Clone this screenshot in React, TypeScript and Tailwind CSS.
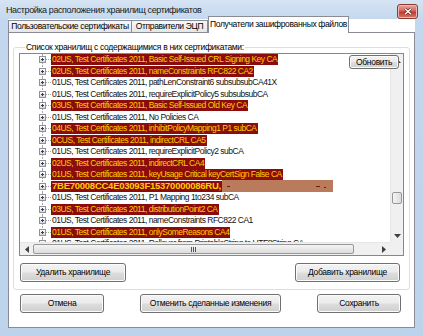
import React from "react";

type Row = { text: string; hl?: boolean; bold?: boolean };

const rows: Row[] = [
  { text: "02US, Test Certificates 2011, Basic Self-Issued CRL Signing Key CA", hl: true },
  { text: "02US, Test Certificates 2011, nameConstraints RFC822 CA2", hl: true },
  { text: "01US, Test Certificates 2011, pathLenConstraint6 subsubsubCA41X" },
  { text: "01US, Test Certificates 2011, requireExplicitPolicy5 subsubsubCA" },
  { text: "03US, Test Certificates 2011, Basic Self-Issued Old Key CA", hl: true },
  { text: "01US, Test Certificates 2011, No Policies CA" },
  { text: "04US, Test Certificates 2011, inhibitPolicyMapping1 P1 subCA", hl: true },
  { text: "0CUS, Test Certificates 2011, indirectCRL CA5", hl: true },
  { text: "01US, Test Certificates 2011, requireExplicitPolicy2 subCA" },
  { text: "02US, Test Certificates 2011, indirectCRL CA4", hl: true },
  { text: "01US, Test Certificates 2011, keyUsage Critical keyCertSign False CA", hl: true },
  { text: "7BE70008CC4E03093F15370000086RU,", hl: true, bold: true },
  { text: "01US, Test Certificates 2011, P1 Mapping 1to234 subCA" },
  { text: "03US, Test Certificates 2011, distributionPoint2 CA", hl: true },
  { text: "01US, Test Certificates 2011, nameConstraints RFC822 CA1" },
  { text: "01US, Test Certificates 2011, onlySomeReasons CA4", hl: true },
  { text: "01US, Test Certificates 2011, Rollover from PrintableString to UTF8String CA" },
];

function WinButton({ label, className }: { label: string; className?: string }) {
  return (
    <button
      className={
        "flex items-center justify-center whitespace-nowrap rounded-[3px] border border-[#707070] bg-[linear-gradient(#f3f3f3,#ebebeb_48%,#dddddd_52%,#cfcfcf)] text-[8.5px] leading-none tracking-[-0.3px] text-black shadow-[inset_0_0_0_1px_#fcfcfc] " +
        (className ?? "")
      }
    >
      {label}
    </button>
  );
}

function Arrow({ dir }: { dir: "up" | "down" | "left" | "right" }) {
  const pts = {
    up: "0,4 3.5,0 7,4",
    down: "0,0 3.5,4 7,0",
    left: "4,0 0,3.5 4,7",
    right: "0,0 4,3.5 0,7",
  }[dir];
  const vertical = dir === "up" || dir === "down";
  return (
    <svg width={vertical ? 7 : 4} height={vertical ? 4 : 7} viewBox={vertical ? "0 0 7 4" : "0 0 4 7"}>
      <polygon points={pts} fill="#404040" />
    </svg>
  );
}

function TreeRow({ row }: { row: Row }) {
  return (
    <div className="flex h-[11.5px] items-center whitespace-nowrap">
      <div className="w-[19px] shrink-0" />
      <div className="relative flex h-full w-[7px] shrink-0 items-center">
        <div className="absolute bottom-0 left-[3px] top-0 border-l border-dotted border-[#a5a5a5]" />
        <div className="relative flex h-[7px] w-[7px] items-center justify-center border border-[#919191] bg-[linear-gradient(#ffffff,#d9d9d9)]">
          <div className="absolute h-px w-[3px] bg-[#2f3f5f]" />
          <div className="absolute h-[3px] w-px bg-[#2f3f5f]" />
        </div>
      </div>
      <div className="w-[5px] shrink-0 border-t border-dotted border-[#a5a5a5]" />
      {row.hl ? (
        <span
          className={
            "flex h-[11px] items-center bg-[#8b0c0c] px-[1px] text-[#ffcc00] " +
            (row.bold ? "text-[9.5px] font-bold tracking-[-0.25px]" : "text-[8.5px] tracking-[-0.5px]")
          }
        >
          {row.text}
        </span>
      ) : (
        <span className="px-[1px] text-[8.5px] tracking-[-0.5px] text-[#111]">{row.text}</span>
      )}
      {row.bold && (
        <span className="flex h-[12px] w-[111px] items-center bg-[#ba7b5d]">
          <span className="ml-[5px] h-px w-[3px] bg-[#6a1c10]" />
          <span className="ml-[86px] h-px w-[4px] bg-[#6a1c10]" />
          <span className="ml-[4px] mt-[3px] h-px w-[2px] bg-[#6a1c10]" />
        </span>
      )}
    </div>
  );
}

export default function App() {
  return (
    <div className="flex h-[336px] w-[423px] flex-col bg-[linear-gradient(#d6e4f4,#c3d7ee_20px,#bdd3ec)] font-['Liberation_Sans',Arial,sans-serif] text-black">
      {/* title bar */}
      <div className="flex h-[19px] shrink-0 items-start">
        <div className="ml-[6px] mt-[4px] whitespace-nowrap text-[9px] leading-[12px] tracking-[-0.4px] text-[#1a1a1a]">
          Настройка расположения хранилищ сертификатов
        </div>
        <div className="ml-auto mr-[5px] mt-[4px] flex h-[15px] w-[21px] items-center justify-center rounded-[3px] border border-[#8a3a32] bg-[linear-gradient(#e9a99f,#d0685c_45%,#c0392b_55%,#d77a6c)] shadow-[inset_0_0_0_1px_#f0b8b0]">
          <svg width="8" height="7" viewBox="0 0 8 7">
            <path d="M1 0.8 L7 6.2 M7 0.8 L1 6.2" stroke="#5a1a14" strokeWidth="2.6" />
            <path d="M1 0.8 L7 6.2 M7 0.8 L1 6.2" stroke="#ffffff" strokeWidth="1.5" />
          </svg>
        </div>
      </div>

      {/* client */}
      <div className="mx-[8px] mb-[8px] flex flex-1 flex-col bg-white">
        {/* tabs */}
        <div className="flex h-[13px] shrink-0 items-end whitespace-nowrap text-[8.5px] leading-none tracking-[-0.35px]">
          <div className="flex h-[12px] w-[124px] items-center justify-center border border-b-0 border-[#898c95] bg-[linear-gradient(#f7f7f7,#e6e6e6)]">
            Пользовательские сертификаты
          </div>
          <div className="-ml-px flex h-[12px] w-[77px] items-center justify-center border border-b-0 border-[#898c95] bg-[linear-gradient(#f7f7f7,#e6e6e6)]">
            Отправители ЭЦП
          </div>
          <div className="relative z-10 -mb-px flex h-[17px] w-[141px] items-center justify-center border border-b-0 border-[#898c95] bg-white pb-[2px]">
            Получатели зашифрованных файлов
          </div>
        </div>

        {/* tab page */}
        <div className="flex flex-1 flex-col border border-[#898c95] bg-white">
          <fieldset className="mx-[4px] mt-[10px] rounded-[3px] border border-[#d5dfe5] px-[5px] pb-[7px] pt-[1px]">
            <legend className="ml-[6px] whitespace-nowrap px-[1px] text-[8.5px] leading-[9px] tracking-[-0.3px]">
              Список хранилищ с содержащимися в них сертификатами:
            </legend>

            {/* tree view */}
            <div className="relative flex h-[203px] flex-col border border-[#828790] bg-white">
              <div className="flex min-h-0 flex-1">
                <div className="min-w-0 flex-1 overflow-hidden">
                  {rows.map((r, i) => (
                    <TreeRow key={i} row={r} />
                  ))}
                </div>
                <div className="flex w-[13px] shrink-0 flex-col border-l border-[#e6e6e6] bg-[#f0f0f0]">
                  <div className="flex h-[13px] items-center justify-center">
                    <Arrow dir="up" />
                  </div>
                  <div className="h-[125px]" />
                  <div className="mx-[1px] h-[12px] rounded-[2px] border border-[#979797] bg-[linear-gradient(90deg,#f4f4f4,#dcdcdc)]" />
                  <div className="flex-1" />
                  <div className="flex h-[13px] items-center justify-center">
                    <Arrow dir="down" />
                  </div>
                </div>
              </div>
              <div className="flex h-[13px] shrink-0">
                <div className="flex flex-1 items-stretch border-t border-[#e6e6e6] bg-[#f0f0f0]">
                  <div className="flex w-[13px] items-center justify-center">
                    <Arrow dir="left" />
                  </div>
                  <div className="my-[1px] flex w-[321px] items-center justify-center gap-[1px] rounded-[2px] border border-[#979797] bg-[linear-gradient(#f4f4f4,#dcdcdc)]">
                    <span className="h-[5px] w-px bg-[#555]" />
                    <span className="h-[5px] w-px bg-[#555]" />
                    <span className="h-[5px] w-px bg-[#555]" />
                  </div>
                  <div className="flex-1" />
                  <div className="flex w-[13px] items-center justify-center">
                    <Arrow dir="right" />
                  </div>
                </div>
                <div className="w-[13px] bg-[#f0f0f0]" />
              </div>

              <WinButton
                label="Обновить"
                className="absolute right-[4px] top-[1px] h-[14px] w-[50px]"
              />
            </div>

            <div className="mt-[7px] flex justify-between pl-[1px] pr-[4px]">
              <WinButton label="Удалить хранилище" className="h-[19px] w-[106px]" />
              <WinButton label="Добавить хранилище" className="h-[19px] w-[105px]" />
            </div>
          </fieldset>

          <div className="ml-[11px] mr-[13px] mt-[4px] flex justify-between">
            <WinButton label="Отмена" className="h-[19px] w-[84px]" />
            <WinButton label="Отменить сделанные изменения" className="h-[19px] w-[141px]" />
            <WinButton label="Сохранить" className="h-[19px] w-[84px]" />
          </div>
        </div>
      </div>
    </div>
  );
}
